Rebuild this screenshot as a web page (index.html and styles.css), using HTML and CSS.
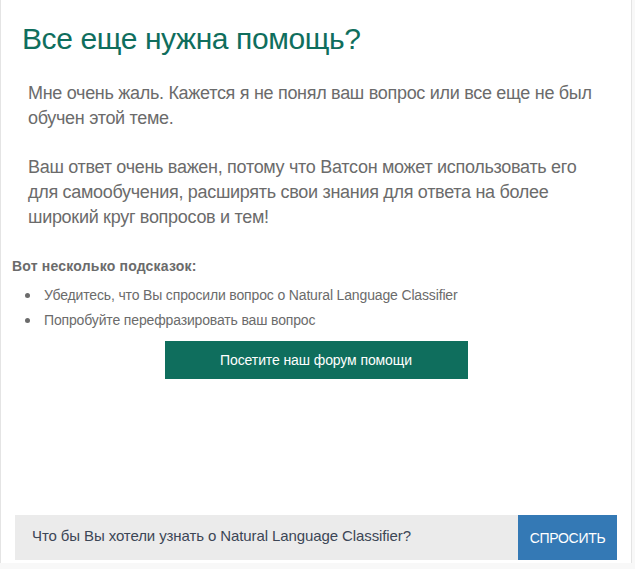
FILE: index.html
```html
<!DOCTYPE html>
<html lang="ru">
<head>
<meta charset="utf-8">
<link rel="stylesheet" href="styles.css">
</head>
<body>
<div class="panel">
  <div class="content">
    <h1 class="title">Все еще нужна помощь?</h1>
    <div class="message">
      <p>Мне очень жаль. Кажется я не понял ваш вопрос или все еще не был обучен этой теме.</p>
      <p>Ваш ответ очень важен, потому что Ватсон может использовать его для самообучения, расширять свои знания для ответа на более широкий круг вопросов и тем!</p>
    </div>
    <div class="hints">
      <div class="hints-title">Вот несколько подсказок:</div>
      <ul class="hints-list">
        <li>Убедитесь, что Вы спросили вопрос о Natural Language Classifier</li>
        <li>Попробуйте перефразировать ваш вопрос</li>
      </ul>
      <div class="forum-row">
        <button class="forum-btn">Посетите наш форум помощи</button>
      </div>
    </div>
  </div>
  <div class="ask-bar">
    <div class="ask-input">Что бы Вы хотели узнать о Natural Language Classifier?</div>
    <button class="ask-btn">СПРОСИТЬ</button>
  </div>
</div>
</body>
</html>
```
FILE: styles.css
```css
html, body {
  margin: 0;
  padding: 0;
}
body {
  background: #f8f8f8;
  font-family: "Liberation Sans", Arial, Helvetica, sans-serif;
  width: 635px;
  height: 569px;
  overflow: hidden;
}
.panel {
  width: 630px;
  height: 563px;
  background: #ffffff;
  border-left: 1px solid #e4e4e4;
  border-right: 1px solid #e4e4e4;
  display: flex;
  flex-direction: column;
}
.content {
  flex: 1;
}
.title {
  margin: 0;
  padding: 21px 0 0 21px;
  font-size: 30px;
  font-weight: normal;
  line-height: 36px;
  letter-spacing: -0.4px;
  color: #0f6e5d;
}
.message {
  padding: 24px 36px 0 27px;
  color: #6b6b6b;
  font-size: 18px;
  line-height: 25px;
  letter-spacing: -0.3px;
}
.message p {
  margin: 0 0 24px 0;
}
.hints {
  padding: 4px 0 0 11px;
}
.hints-title {
  font-size: 14px;
  font-weight: bold;
  color: #6b6b6b;
  line-height: 16px;
  letter-spacing: 0.2px;
}
.hints-list {
  list-style: none;
  margin: 9px 0 0 0;
  padding: 0 0 0 13px;
  font-size: 14px;
  color: #6b6b6b;
  line-height: 25px;
  letter-spacing: -0.15px;
}
.hints-list li {
  display: flex;
  align-items: center;
}
.hints-list li::before {
  content: "";
  width: 5px;
  height: 5px;
  border-radius: 50%;
  background: #6b6b6b;
  margin-right: 14px;
  flex: none;
}
.forum-row {
  display: flex;
  justify-content: center;
  padding: 8px 11px 0 0;
}
.forum-btn {
  width: 303px;
  height: 38px;
  background: #0f6e5d;
  color: #ffffff;
  border: none;
  font-family: inherit;
  font-size: 14px;
  letter-spacing: -0.1px;
}
.ask-bar {
  display: flex;
  margin: 0 14px 3px 14px;
  height: 45px;
}
.ask-input {
  flex: 1;
  background: #ebebeb;
  color: #3c4656;
  font-size: 15px;
  letter-spacing: -0.1px;
  padding: 12px 0 0 17px;
  box-sizing: border-box;
}
.ask-btn {
  width: 99px;
  background: #3479b5;
  color: #ffffff;
  border: none;
  font-family: inherit;
  font-size: 14px;
  letter-spacing: -0.3px;
}
```
